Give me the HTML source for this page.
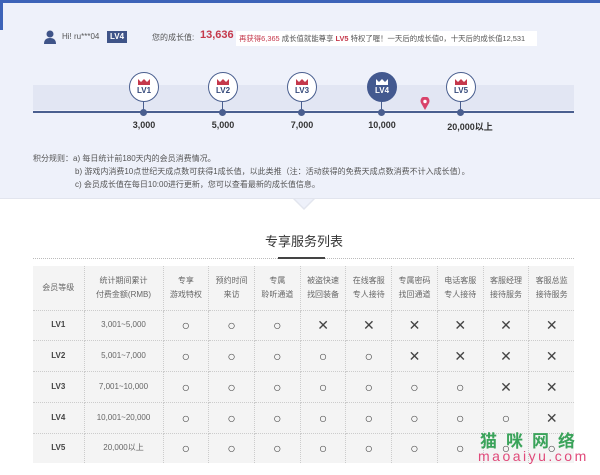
<!DOCTYPE html>
<html><head><meta charset="utf-8"><style>
*{margin:0;padding:0;box-sizing:border-box}
body{width:600px;height:475px;overflow:hidden;background:#fff;font-family:"Liberation Sans","Noto Sans CJK SC",sans-serif;position:relative;color:#555}
.a{position:absolute;white-space:nowrap}
#top{position:absolute;left:0;top:0;width:600px;height:199px;background:#eef1fa;border-bottom:1px solid #e2e5ee}
.circ{position:absolute;width:30px;height:30px;border-radius:50%;background:#fff;border:1.5px solid #4a5f8f;text-align:center;font-size:8px;color:#34497a;font-weight:bold}
.circ .cr{display:block;margin:6px auto 1px;width:12px;height:6px;background:#c5384b;clip-path:polygon(0 0,25% 50%,50% 0,75% 50%,100% 0,100% 100%,0 100%)}
.circ.on{background:#43598f;color:#fff;border-color:#43598f}
.circ.on .cr{background:#fff}
.dot{position:absolute;width:7px;height:7px;border-radius:50%;background:#4a5f8f}
.stem{position:absolute;width:1px;background:#4a5f8f}
.lbl{position:absolute;font-size:9px;font-weight:bold;color:#333;transform:translateX(-50%)}
.rule{font-size:8px;color:#555}
table{position:absolute;left:33px;top:266px;width:541px;height:197px;background:#f4f4f4;border-collapse:collapse;font-size:8px;color:#666;text-align:center}
td{border-right:1px dotted #ccc;border-bottom:1px dotted #ccc;line-height:14px}
td:last-child{border-right:none}
tr:last-child td{border-bottom:none}
.c{font-size:14px;color:#444}
</style></head><body>
<div id="top"></div>
<div class="a" style="left:0;top:0;width:600px;height:3px;background:#3d63b8"></div>
<div class="a" style="left:0;top:0;width:3px;height:30px;background:#3d63b8"></div>
<svg class="a" style="left:44px;top:30px" width="12" height="14" viewBox="0 0 12 14"><circle cx="6" cy="4" r="3.5" fill="#3f5488"/><path d="M0 14 Q0 8 6 8 Q12 8 12 14Z" fill="#3f5488"/></svg>
<div class="a" style="left:62px;top:32px;font-size:8px;color:#555">Hi! ru***04</div>
<div class="a" style="left:107px;top:31px;width:20px;height:12px;background:#3f5488;color:#fff;font-size:8px;font-weight:bold;text-align:center;line-height:12px">LV4</div>
<div class="a" style="left:152px;top:32px;font-size:8px;color:#555">您的成长值:</div>
<div class="a" style="left:200px;top:29px;font-size:11px;color:#c5384b;font-weight:bold">13,636</div>
<div class="a" style="left:236px;top:31px;width:301px;height:15px;background:#fff;font-size:7.4px;line-height:15px;padding-left:3px;color:#555"><span style="color:#c5384b">再获得6,365</span> 成长值就能尊享 <b style="color:#c5384b">LV5</b> 特权了喔！一天后的成长值0，十天后的成长值12,531</div>
<div class="a" style="left:33px;top:85px;width:541px;height:25px;background:#e2e6f3"></div>
<div class="a" style="left:33px;top:111px;width:541px;height:2px;background:#4a5f8f"></div>
<div class="stem" style="left:143px;top:100px;height:12px"></div><div class="circ" style="left:129px;top:72px"><i class="cr"></i>LV1</div><div class="dot" style="left:140px;top:109px"></div><div class="lbl" style="left:144px;top:120px">3,000</div>
<div class="stem" style="left:222px;top:100px;height:12px"></div><div class="circ" style="left:208px;top:72px"><i class="cr"></i>LV2</div><div class="dot" style="left:219px;top:109px"></div><div class="lbl" style="left:223px;top:120px">5,000</div>
<div class="stem" style="left:301px;top:100px;height:12px"></div><div class="circ" style="left:287px;top:72px"><i class="cr"></i>LV3</div><div class="dot" style="left:298px;top:109px"></div><div class="lbl" style="left:302px;top:120px">7,000</div>
<div class="stem" style="left:381px;top:100px;height:12px"></div><div class="circ on" style="left:367px;top:72px"><i class="cr"></i>LV4</div><div class="dot" style="left:378px;top:109px"></div><div class="lbl" style="left:382px;top:120px">10,000</div>
<div class="stem" style="left:460px;top:100px;height:12px"></div><div class="circ" style="left:446px;top:72px"><i class="cr"></i>LV5</div><div class="dot" style="left:457px;top:109px"></div><div class="lbl" style="left:470px;top:120px">20,000以上</div>
<svg class="a" style="left:420px;top:97px" width="10" height="13" viewBox="0 0 10 13"><path d="M5 13 L1 6 A4.5 4.5 0 1 1 9 6Z" fill="#d9426a"/><circle cx="5" cy="4.5" r="1.7" fill="#fff"/></svg>
<div class="a rule" style="left:33px;top:153px">积分规则：a) 每日统计前180天内的会员消费情况。</div>
<div class="a rule" style="left:75px;top:166px">b) 游戏内消费10点世纪天成点数可获得1成长值，以此类推（注：活动获得的免费天成点数消费不计入成长值）。</div>
<div class="a rule" style="left:75px;top:179px">c) 会员成长值在每日10:00进行更新，您可以查看最新的成长值信息。</div>
<div class="a" style="left:293px;top:199px;width:0;height:0;border-left:11px solid transparent;border-right:11px solid transparent;border-top:11px solid #e2e5ee"></div>
<div class="a" style="left:295px;top:199px;width:0;height:0;border-left:9px solid transparent;border-right:9px solid transparent;border-top:9px solid #eef1fa"></div>
<div class="a" style="left:265px;top:231px;font-size:13px;color:#333">专享服务列表</div>
<div class="a" style="left:33px;top:258px;width:541px;border-top:1px dotted #bbb"></div>
<div class="a" style="left:278px;top:257px;width:47px;height:2px;background:#444"></div>
<table>
<tr style="height:44px"><td style="width:51px">会员等级</td><td style="width:79px">统计期间累计<br>付费金额(RMB)</td><td>专享<br>游戏特权</td><td>预约时间<br>来访</td><td>专属<br>聆听通道</td><td>被盗快速<br>找回装备</td><td>在线客服<br>专人接待</td><td>专属密码<br>找回通道</td><td>电话客服<br>专人接待</td><td>客服经理<br>接待服务</td><td>客服总监<br>接待服务</td></tr>
<tr><td><b style="color:#444">LV1</b></td><td>3,001~5,000</td><td class="c">○</td><td class="c">○</td><td class="c">○</td><td class="c">✕</td><td class="c">✕</td><td class="c">✕</td><td class="c">✕</td><td class="c">✕</td><td class="c">✕</td></tr>
<tr><td><b style="color:#444">LV2</b></td><td>5,001~7,000</td><td class="c">○</td><td class="c">○</td><td class="c">○</td><td class="c">○</td><td class="c">○</td><td class="c">✕</td><td class="c">✕</td><td class="c">✕</td><td class="c">✕</td></tr>
<tr><td><b style="color:#444">LV3</b></td><td>7,001~10,000</td><td class="c">○</td><td class="c">○</td><td class="c">○</td><td class="c">○</td><td class="c">○</td><td class="c">○</td><td class="c">○</td><td class="c">✕</td><td class="c">✕</td></tr>
<tr><td><b style="color:#444">LV4</b></td><td>10,001~20,000</td><td class="c">○</td><td class="c">○</td><td class="c">○</td><td class="c">○</td><td class="c">○</td><td class="c">○</td><td class="c">○</td><td class="c">○</td><td class="c">✕</td></tr>
<tr><td><b style="color:#444">LV5</b></td><td>20,000以上</td><td class="c">○</td><td class="c">○</td><td class="c">○</td><td class="c">○</td><td class="c">○</td><td class="c">○</td><td class="c">○</td><td class="c">○</td><td class="c">○</td></tr>
</table>
<div class="a" style="left:480px;top:427px;font-size:17px;font-weight:bold;color:#3aa35a;letter-spacing:9px">猫咪网络</div>
<div class="a" style="left:478px;top:448px;font-size:14px;color:#e04a7a;letter-spacing:2.5px">maoaiyu.com</div>
</body></html>
